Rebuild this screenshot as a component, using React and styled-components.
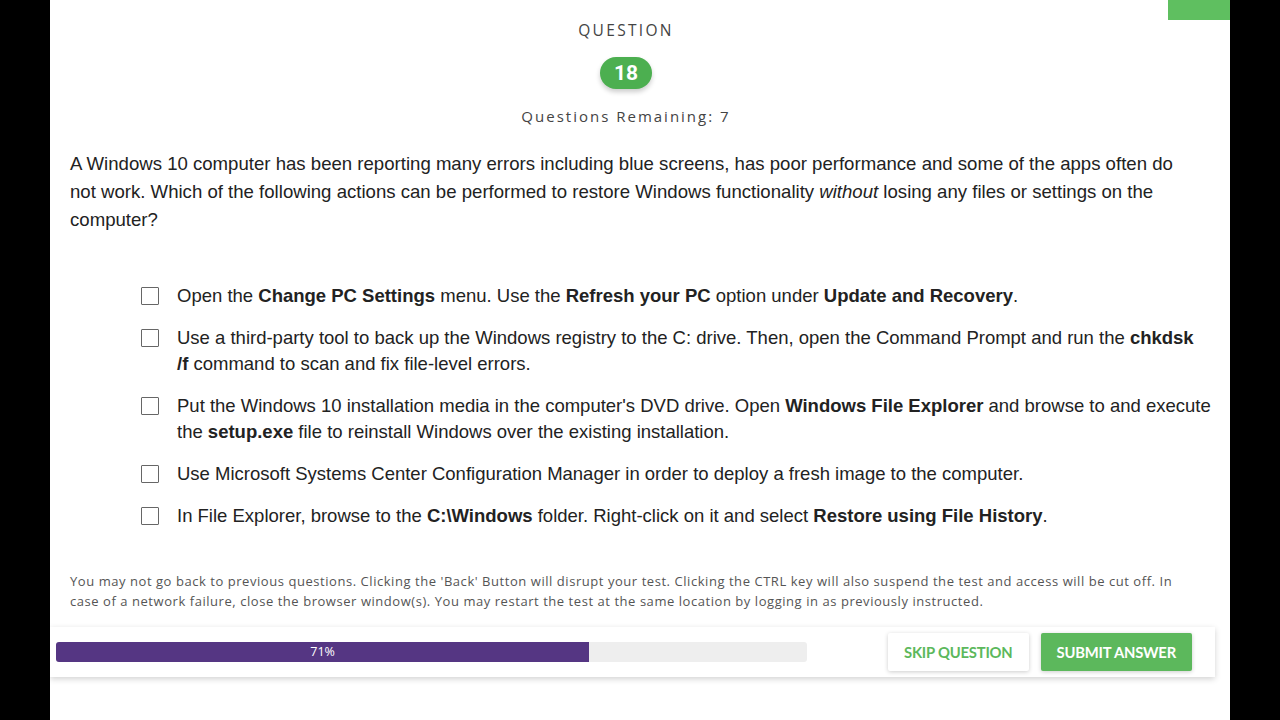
import styled, { createGlobalStyle } from "styled-components";

const Global = createGlobalStyle`
  html, body {
    margin: 0;
    padding: 0;
    background: #000;
  }
  * { box-sizing: border-box; }
`;

const options = [
  <>Open the <b>Change PC Settings</b> menu. Use the <b>Refresh your PC</b> option under <b>Update and Recovery</b>.</>,
  <>Use a third-party tool to back up the Windows registry to the C: drive. Then, open the Command Prompt and run the <b>chkdsk</b><br /><b>/f</b> command to scan and fix file-level errors.</>,
  <>Put the Windows 10 installation media in the computer's DVD drive. Open <b>Windows File Explorer</b> and browse to and execute the <b>setup.exe</b> file to reinstall Windows over the existing installation.</>,
  <>Use Microsoft Systems Center Configuration Manager in order to deploy a fresh image to the computer.</>,
  <>In File Explorer, browse to the <b>C:\Windows</b> folder. Right-click on it and select <b>Restore using File History</b>.</>,
];

export default function App() {
  const progress = 71;
  return (
    <>
      <Global />
      <Page>
        <Tab />
        <Header>
          <Label>QUESTION</Label>
          <Badge>18</Badge>
          <Remaining>Questions Remaining: 7</Remaining>
        </Header>

        <Prompt>
          A Windows 10 computer has been reporting many errors including blue screens, has poor performance and some of the apps often do not work. Which of the following actions can be performed to restore Windows functionality <i>without</i> losing any files or settings on the computer?
        </Prompt>

        <Options>
          {options.map((text, i) => (
            <Option key={i}>
              <Box />
              <OptionText>{text}</OptionText>
            </Option>
          ))}
        </Options>

        <Notice>
          You may not go back to previous questions. Clicking the 'Back' Button will disrupt your test. Clicking the CTRL key will also suspend the test and access will be cut off. In case of a network failure, close the browser window(s). You may restart the test at the same location by logging in as previously instructed.
        </Notice>

        <Footer>
          <Track>
            <Fill style={{ width: `${progress}%` }}>{progress}%</Fill>
          </Track>
          <Button>SKIP QUESTION</Button>
          <Button primary>SUBMIT ANSWER</Button>
        </Footer>
      </Page>
    </>
  );
}

const Page = styled.div`
  position: relative;
  width: 1180px;
  height: 720px;
  margin-left: 50px;
  background: #fff;
  padding: 20px 0 0;
  overflow: hidden;
`;

const Tab = styled.div`
  position: absolute;
  top: 0;
  right: 0;
  width: 62px;
  height: 20px;
  background: #5fbf60;
`;

const Header = styled.div`
  width: 1152px;
  display: flex;
  flex-direction: column;
  align-items: center;
  font-family: "Open Sans", sans-serif;
  color: #444;
`;

const Label = styled.div`
  font-size: 15.5px;
  letter-spacing: 2.3px;
  line-height: 20px;
`;

const Badge = styled.div`
  margin-top: 17px;
  width: 52px;
  height: 32px;
  border-radius: 16px;
  background: #4caf50;
  color: #fff;
  font-family: Roboto, sans-serif;
  font-weight: 700;
  font-size: 21px;
  display: flex;
  align-items: center;
  justify-content: center;
  box-shadow: 0 3px 5px rgba(0, 0, 0, 0.2);
`;

const Remaining = styled.div`
  margin-top: 17px;
  font-size: 15px;
  letter-spacing: 2px;
  line-height: 20px;
`;

const Prompt = styled.p`
  margin: 24px 0 0;
  padding: 0 40px 0 20px;
  font-family: "Liberation Sans", Arial, sans-serif;
  font-size: 18.6px;
  line-height: 28px;
  color: #222;
`;

const Options = styled.div`
  margin-top: 49px;
  padding-left: 91px;
  padding-right: 14px;
  display: flex;
  flex-direction: column;
  gap: 16px;
`;

const Option = styled.div`
  display: flex;
  align-items: flex-start;
  gap: 18px;
`;

const Box = styled.span`
  flex: none;
  width: 18px;
  height: 18px;
  margin-top: 4px;
  border: 1.5px solid #666;
  border-radius: 1px;
  background: #fff;
`;

const OptionText = styled.div`
  font-family: "Liberation Sans", Arial, sans-serif;
  font-size: 18.5px;
  line-height: 26px;
  color: #222;

  b { font-weight: 700; }
`;

const Notice = styled.p`
  margin: 42px 0 0;
  padding: 0 40px 0 20px;
  font-family: "Open Sans", sans-serif;
  font-size: 13px;
  letter-spacing: 0.55px;
  line-height: 20px;
  color: #555;
`;

const Footer = styled.div`
  margin-top: 16px;
  width: 1165px;
  height: 50px;
  display: flex;
  align-items: center;
  padding: 0 23px 0 6px;
  background: #fff;
  box-shadow: 0 2px 6px rgba(0, 0, 0, 0.18);
`;

const Track = styled.div`
  width: 751px;
  height: 20px;
  background: #eeeeee;
  border-radius: 3px;
  margin-right: auto;
  overflow: hidden;
`;

const Fill = styled.div`
  height: 100%;
  background: #553683;
  color: #fff;
  font-family: "Open Sans", sans-serif;
  font-size: 12.5px;
  line-height: 20px;
  text-align: center;
`;

const Button = styled.button`
  height: 38px;
  padding: 0 16px;
  margin-left: 12px;
  border: none;
  border-radius: 2px;
  font-family: Lato, sans-serif;
  font-weight: 700;
  font-size: 14.8px;
  letter-spacing: -0.2px;
  cursor: pointer;
  background: ${(p) => (p.primary ? "#5cb85c" : "#fff")};
  color: ${(p) => (p.primary ? "#fff" : "#5cb85c")};
  box-shadow: 0 1px 4px rgba(0, 0, 0, 0.2);
`;
